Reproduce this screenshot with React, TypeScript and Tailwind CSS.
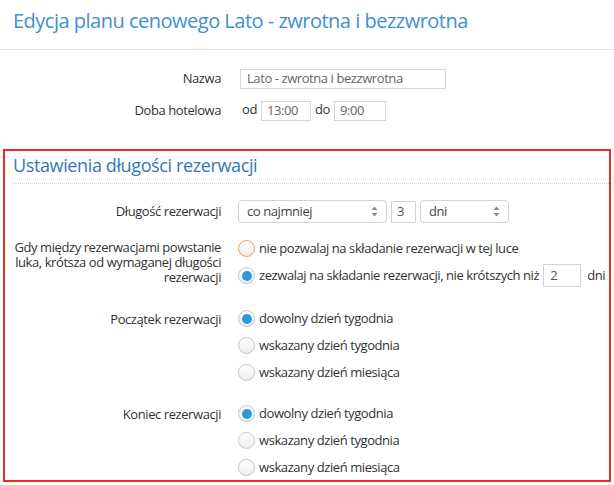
import clsx from 'clsx'

// Pole wyboru (radio) w stylu przeglądarki
const Radio = ({ checked, accent }: { checked?: boolean; accent?: boolean }) => (
  <span
    className={clsx(
      'flex h-[17px] w-[17px] shrink-0 items-center justify-center rounded-full border bg-gradient-to-b from-white to-[#ededed]',
      accent ? 'border-[#f19a55]' : 'border-[#c4c4c4]'
    )}
  >
    {checked && <span className="h-[10px] w-[10px] rounded-full bg-[#2b9ad8]" />}
  </span>
)

const Arrows = () => (
  <svg width="7" height="11" viewBox="0 0 7 11" className="shrink-0">
    <path d="M3.5 0.5 L6.5 4 H0.5 Z" fill="#8a8a8a" />
    <path d="M3.5 10.5 L6.5 7 H0.5 Z" fill="#8a8a8a" />
  </svg>
)

const Select = ({ value, width }: { value: string; width: string }) => (
  <div
    className={clsx(
      'flex h-[23px] items-center justify-between rounded-[4px] border border-[#d3d3d3] bg-white pl-[8px] pr-[8px] text-[#444]',
      width
    )}
  >
    <span>{value}</span>
    <Arrows />
  </div>
)

const RadioRow = ({
  label,
  checked,
  accent
}: {
  label: string
  checked?: boolean
  accent?: boolean
}) => (
  <div className="flex h-[27px] items-center gap-[4px]">
    <Radio checked={checked} accent={accent} />
    <span>{label}</span>
  </div>
)

const opcjeDnia = ['dowolny dzień tygodnia', 'wskazany dzień tygodnia', 'wskazany dzień miesiąca']

const App = () => {
  return (
    <div className="h-[485px] w-[614px] overflow-hidden bg-white font-['Open_Sans',sans-serif] text-[13px] tracking-[-0.42px] text-[#333]">
      {/* Nagłówek */}
      <div className="h-[50px] border-b border-[#e4e4e4] pl-[13px] pt-[7px] text-[20px] leading-[28px] tracking-[-0.5px] text-[#3f8fd2]">
        Edycja planu cenowego Lato - zwrotna i bezzwrotna
      </div>

      {/* Dane podstawowe */}
      <div className="grid grid-cols-[221px_1fr] gap-x-[19px] gap-y-[12px] pt-[19px]">
        <div className="flex h-[20px] items-center justify-end">Nazwa</div>
        <div className="flex h-[20px] w-[206px] items-center border border-[#d6d6d6] px-[6px] text-[#666]">
          Lato - zwrotna i bezzwrotna
        </div>

        <div className="flex h-[20px] items-center justify-end">Doba hotelowa</div>
        <div className="flex h-[20px] items-start gap-[4px]">
          <span className="ml-[2px] leading-[16px]">od</span>
          <span className="flex h-[20px] w-[50px] items-center border border-[#d6d6d6] px-[5px] text-[#666]">
            13:00
          </span>
          <span className="leading-[16px]">do</span>
          <span className="flex h-[20px] w-[52px] items-center border border-[#d6d6d6] px-[5px] text-[#666]">
            9:00
          </span>
        </div>
      </div>

      {/* Ustawienia długości rezerwacji */}
      <div className="mx-[3px] mt-[28px] h-[333px] border-2 border-[#f12b1e]">
        <div className="ml-[7px] border-b border-dotted border-[#cfcfcf] pl-[1px] pt-[2px] pb-[6px] text-[18px] leading-[24px] tracking-[-0.38px] text-[#3576b8]">
          Ustawienia długości rezerwacji
        </div>

        <div className="mt-[16px] grid grid-cols-[216px_1fr] gap-x-[17px]">
          <div className="flex h-[23px] items-center justify-end">Długość rezerwacji</div>
          <div className="flex items-center gap-[4px]">
            <Select value="co najmniej" width="w-[149px]" />
            <span className="flex h-[22px] w-[25px] items-center border border-[#d3d3d3] px-[5px] text-[#555]">
              3
            </span>
            <Select value="dni" width="w-[89px]" />
          </div>

          <div className="mt-[12px] pl-[8px] pt-[5px] text-right leading-[15px]">
            Gdy między rezerwacjami powstanie luka, krótsza od wymaganej długości rezerwacji
          </div>
          <div className="mt-[12px] flex flex-col">
            <RadioRow label="nie pozwalaj na składanie rezerwacji w tej luce" accent />
            <div className="flex h-[27px] items-center gap-[4px]">
              <Radio checked />
              <span>zezwalaj na składanie rezerwacji, nie krótszych niż</span>
              <span className="flex h-[23px] w-[38px] items-center border border-[#d3d3d3] px-[6px] text-[#555]">
                2
              </span>
              <span className="ml-[2px]">dni</span>
            </div>
          </div>

          <div className="mt-[16px] pt-[5px] text-right leading-[18px]">Początek rezerwacji</div>
          <div className="mt-[16px] flex flex-col">
            {opcjeDnia.map((opcja, index) => (
              <RadioRow key={opcja} label={opcja} checked={index === 0} />
            ))}
          </div>

          <div className="mt-[14px] pt-[5px] text-right leading-[18px]">Koniec rezerwacji</div>
          <div className="mt-[14px] flex flex-col">
            {opcjeDnia.map((opcja, index) => (
              <RadioRow key={opcja} label={opcja} checked={index === 0} />
            ))}
          </div>
        </div>
      </div>
    </div>
  )
}

export default App
